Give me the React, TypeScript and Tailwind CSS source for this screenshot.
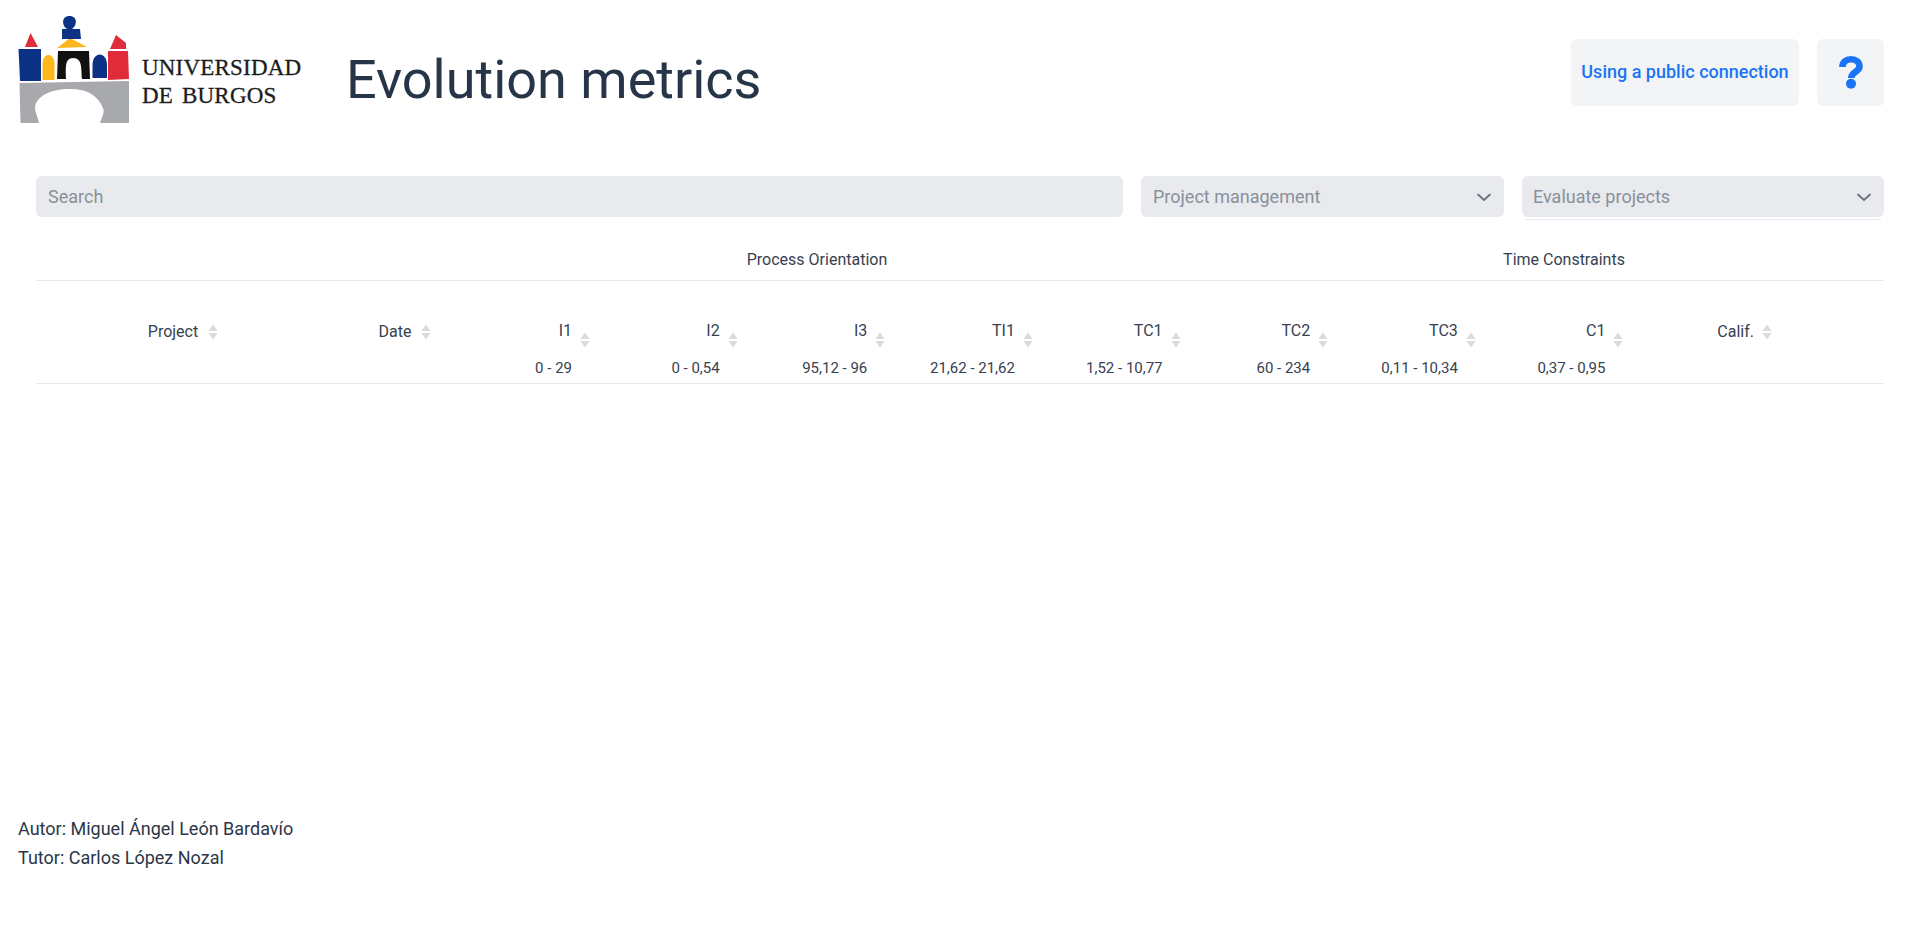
import React from 'react'

const metrics = [
  { name: 'I1', range: '0 - 29' },
  { name: 'I2', range: '0 - 0,54' },
  { name: 'I3', range: '95,12 - 96' },
  { name: 'TI1', range: '21,62 - 21,62' },
  { name: 'TC1', range: '1,52 - 10,77' },
  { name: 'TC2', range: '60 - 234' },
  { name: 'TC3', range: '0,11 - 10,34' },
  { name: 'C1', range: '0,37 - 0,95' },
]

function SortArrows() {
  return (
    <svg width="10" height="16" viewBox="0 0 10 16" className="shrink-0 text-[#dadbde]" fill="currentColor">
      <path d="M5 0.5 9.5 7H0.5z" />
      <path d="M5 15.5 0.5 9h9z" />
    </svg>
  )
}

function Chevron() {
  return (
    <svg width="20" height="20" viewBox="0 0 20 20" fill="none" stroke="#6b7280" strokeWidth="1.8" strokeLinecap="round" strokeLinejoin="round">
      <path d="M4 7.5 10 13l6-5.5" />
    </svg>
  )
}

function QuestionMark() {
  return (
    <svg width="24" height="33" viewBox="0 0 24 33" fill="none">
      <path d="M3.5 11C3.5 6 7 3.3 12 3.3S20.5 6 20.5 10.5C20.5 16 12.3 15.5 12.3 22" stroke="#1b74f5" strokeWidth="6.6" />
      <circle cx="12" cy="27.7" r="5" fill="#1b74f5" />
    </svg>
  )
}

function Logo() {
  return (
    <div className="relative w-[320px] h-[140px] shrink-0">
      <svg viewBox="18 15 112 112" className="absolute left-[18px] top-[15px] w-[112px] h-[112px]">
        <path d="M25 47 30.5 33 38 47z" fill="#e02b3a" />
        <path d="M18.5 49H41V81H20z" fill="#0b3284" />
        <path d="M42.5 80V64C42.5 52 54.5 52 54.5 64V80z" fill="#fdb71c" />
        <path d="M57 79 58 51H89L90 79H82C81 70 83 58 73 58 64 58 66 70 66 79z" fill="#111" />
        <path d="M57 48 70 38 87 47z" fill="#fdb71c" />
        <path d="M62 39V29H67C62 26 61 16 69.5 16 78 16 77 26 72 29H80L81 39z" fill="#0b3284" />
        <path d="M92.5 78V65C92.5 51 107 51 107 65V78z" fill="#0b3284" />
        <path d="M108 51H128L129 79 108 80z" fill="#e02b3a" />
        <path d="M110 49 116 35 126 43V49z" fill="#e02b3a" />
        <path d="M19.5 83 129 81V123H100C102 117 105 112 103 108 98 96 88 89 70 89 50 89 37 96 35 107 35 112 38 118 39 123H20.5z" fill="#a7a9ac" />
      </svg>
      <div className="absolute left-[142px] top-[54px] font-['Liberation_Serif',serif] text-[23px] leading-[28px] tracking-[0.2px] [word-spacing:3px] text-[#1c1c1c] [-webkit-text-stroke:0.3px_#1c1c1c]">
        <div>UNIVERSIDAD</div>
        <div>DE BURGOS</div>
      </div>
    </div>
  )
}

export default function App() {
  return (
    <div className="min-h-[940px] bg-white font-['Roboto',sans-serif] text-[#374151]">
      <header className="flex items-start pr-[36px]">
        <Logo />
        <h1 className="ml-[26px] mt-[48px] text-[54px] leading-[64px] text-[#273548]">Evolution metrics</h1>
        <div className="ml-auto mt-[39px] flex gap-[18px]">
          <div className="h-[67px] w-[228px] rounded-md bg-[#f3f4f6] flex items-center justify-center pb-[2px] text-[18px] font-medium text-[#1b74f5]">
            Using a public connection
          </div>
          <div className="h-[67px] w-[67px] rounded-md bg-[#f3f4f6] flex items-center justify-center">
            <QuestionMark />
          </div>
        </div>
      </header>

      <div className="mx-9 mt-[36px]">
        <div className="flex gap-[18px]">
          <div className="h-[41px] flex-1 rounded-md bg-[#e8eaee] flex items-center px-3 text-[18px] text-[#8a909a]">Search</div>
          <div className="h-[41px] w-[363px] rounded-md bg-[#e8eaee] flex items-center justify-between pl-3 pr-[10px] text-[18px] text-[#8a909a]">
            Project management
            <Chevron />
          </div>
          <div className="relative h-[41px] w-[362px] rounded-md bg-[#e8eaee] flex items-center justify-between pl-[11px] pr-[10px] text-[18px] text-[#8a909a]">
            Evaluate projects
            <Chevron />
            <span className="absolute left-[3px] right-[3px] top-[43px] h-px bg-[#e3e9f3]" />
          </div>
        </div>

        <div className="grid grid-cols-[445px_672px_91px_640px] h-[64px] pt-[23px] items-center text-[16px] text-center border-b border-[#e5e7eb]">
          <div />
          <div>Process Orientation</div>
          <div />
          <div>Time Constraints</div>
        </div>

        <div className="grid grid-cols-[294px_150px_120px_repeat(7,147.65px)_250.45px] h-[103px] border-b border-[#e5e7eb] text-[16px]">
          <div className="flex items-center justify-center gap-[10px] pb-[1px]">
            Project <SortArrows />
          </div>
          <div className="flex items-center justify-center gap-[10px] pb-[1px]">
            Date <SortArrows />
          </div>
          {metrics.map(m => (
            <div key={m.name} className="flex flex-col items-end pr-[28px] pt-[38px]">
              <div className="relative">
                {m.name}
                <span className="absolute left-[calc(100%+8px)] top-[13px]"><SortArrows /></span>
              </div>
              <div className="mt-[15px] text-[15px] leading-5 whitespace-nowrap">{m.range}</div>
            </div>
          ))}
          <div className="flex items-center justify-center gap-2 pb-[1px] pr-[28px]">
            Calif. <SortArrows />
          </div>
        </div>
      </div>

      <footer className="mt-[430px] pl-[18px] text-[18px] leading-[29px] text-[#2b3648]">
        <div>Autor: Miguel Ángel León Bardavío</div>
        <div>Tutor: Carlos López Nozal</div>
      </footer>
    </div>
  )
}
